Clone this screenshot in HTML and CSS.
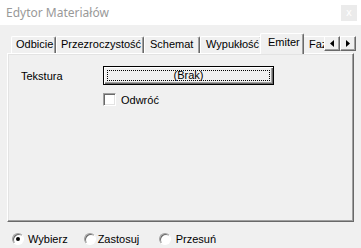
FILE: index.html
```html
<!DOCTYPE html>
<html lang="pl">
<head>
<meta charset="utf-8">
<title>Edytor Materiałów</title>
<link rel="stylesheet" href="styles.css">
</head>
<body>
<div class="titlebar">
  <span class="title">Edytor Materiałów</span>
  <span class="close">x</span>
</div>
<div class="dialog">
  <div class="tabstrip">
    <div class="tabs">
      <div class="tab t-odbicie">Odbicie</div>
      <div class="tab t-przez">Przezroczystość</div>
      <div class="tab t-schemat">Schemat</div>
      <div class="tab t-wypuk">Wypukłość</div>
      <div class="tab t-emiter selected">Emiter</div>
      <div class="tab t-fazy">Fazy</div>
    </div>
    <div class="scroll">
      <div class="sbtn"><svg width="4" height="7" viewBox="0 0 4 7"><polygon points="4,0 4,7 0,3.5" fill="#000"/></svg></div>
      <div class="sbtn"><svg width="4" height="7" viewBox="0 0 4 7"><polygon points="0,0 0,7 4,3.5" fill="#000"/></svg></div>
    </div>
  </div>
  <div class="panel">
    <div class="row">
      <span class="label">Tekstura</span>
      <div class="button"><span class="focus">(Brak)</span></div>
    </div>
    <div class="row check-row">
      <span class="checkbox"></span>
      <span class="check-label">Odwróć</span>
    </div>
  </div>
</div>
<div class="modes">
  <label class="radio r1"><span class="dot on"></span>Wybierz</label>
  <label class="radio r2"><span class="dot"></span>Zastosuj</label>
  <label class="radio r3"><span class="dot"></span>Przesuń</label>
</div>
</body>
</html>
```
FILE: styles.css
```css
html, body {
  margin: 0;
  padding: 0;
}
body {
  width: 361px;
  height: 248px;
  overflow: hidden;
  background: #f0f0f0;
  font-family: "Liberation Sans", Arial, sans-serif;
  font-size: 11px;
  color: #000;
}
.titlebar {
  height: 25px;
  background: #fff;
  display: flex;
  align-items: center;
  justify-content: space-between;
  padding: 0 4px 0 6px;
  box-sizing: border-box;
}
.title {
  font-family: "Noto Sans", "Open Sans", sans-serif;
  font-size: 12px;
  color: #999;
  margin-top: -1px;
}
.close {
  width: 16px;
  height: 16px;
  background: #ebebeb;
  color: #fff;
  font-size: 10px;
  line-height: 15px;
  text-align: center;
  font-family: "DejaVu Sans", sans-serif;
}
.dialog {
  padding: 8px 7px 0 7px;
}
.tabstrip {
  display: flex;
  height: 20px;
  padding-left: 4px;
  position: relative;
  z-index: 1;
}
.tabs {
  flex: 1;
  display: flex;
  align-items: flex-end;
  overflow: hidden;
  height: 21px;
  margin-bottom: -1px;
}
.tab {
  flex: none;
  height: 17px;
  line-height: 15px;
  padding: 0 0 0 4px;
  box-sizing: border-box;
  border-top: 1px solid #fff;
  border-left: 1px solid #fff;
  border-right: 1px solid #696969;
  box-shadow: inset -1px 0 #a0a0a0;
  border-radius: 2px 2px 0 0;
  white-space: nowrap;
  margin-bottom: 1px;
}
.t-odbicie { width: 45px; }
.t-przez { width: 88px; }
.t-schemat { width: 56px; padding-left: 5px; }
.t-wypuk { width: 62px; padding-left: 5px; }
.t-fazy { width: 40px; padding-left: 6px; }
.tab.selected {
  width: 44px;
  height: 21px;
  line-height: 17px;
  margin: 0 -2px 0 -2px;
  padding-left: 7px;
  background: #f0f0f0;
  position: relative;
  z-index: 2;
}
.tab.selected + .tab {
  border-left-color: transparent;
}
.scroll {
  display: flex;
  align-items: flex-start;
  padding-top: 3px;
  margin-right: -2px;
}
.sbtn {
  width: 16px;
  height: 15px;
  box-sizing: border-box;
  border-top: 1px solid #fff;
  border-left: 1px solid #fff;
  border-right: 1px solid #696969;
  border-bottom: 1px solid #696969;
  box-shadow: inset -1px -1px #a0a0a0;
  background: #f0f0f0;
  display: flex;
  align-items: center;
  justify-content: center;
}
.panel {
  height: 169px;
  box-sizing: border-box;
  border-top: 1px solid #fff;
  border-left: 1px solid #fff;
  border-right: 1px solid #696969;
  border-bottom: 1px solid #696969;
  box-shadow: inset -1px -1px #a0a0a0, inset 1px 1px #e3e3e3;
  padding: 12px 0 0 13px;
}
.row {
  display: flex;
  align-items: center;
}
.label {
  width: 82px;
}
.button {
  width: 171px;
  height: 19px;
  box-sizing: border-box;
  border: 1px solid #000;
  box-shadow: inset 1px 1px #fff, inset -1px -1px #696969, inset -2px -2px #a0a0a0;
  padding: 3px;
  display: flex;
}
.focus {
  flex: 1;
  border: 1px dotted #000;
  text-align: center;
  line-height: 9px;
}
.check-row {
  margin-top: 8px;
  padding-left: 82px;
}
.checkbox {
  width: 13px;
  height: 13px;
  box-sizing: border-box;
  background: #fff;
  border-top: 1px solid #a0a0a0;
  border-left: 1px solid #a0a0a0;
  border-right: 1px solid #fff;
  border-bottom: 1px solid #fff;
  box-shadow: inset 1px 1px #696969, inset -1px -1px #e3e3e3;
  margin-right: 5px;
}
.modes {
  display: flex;
  align-items: center;
  padding: 11px 0 0 12px;
}
.radio {
  display: flex;
  align-items: center;
}
.r1 { margin-right: 16px; }
.r2 { margin-right: 0; width: 75px; }
.dot {
  width: 12px;
  height: 12px;
  box-sizing: border-box;
  border-radius: 50%;
  background: #fff;
  border: 1px solid;
  border-color: #a0a0a0 #fff #fff #a0a0a0;
  box-shadow: inset 1px 1px #696969;
  margin-right: 4px;
  display: flex;
  align-items: center;
  justify-content: center;
}
.r2 .dot { margin-right: 2px; }
.r3 .dot { margin-right: 5px; }
.dot.on::after {
  content: "";
  width: 4px;
  height: 4px;
  border-radius: 50%;
  background: #000;
}
```
